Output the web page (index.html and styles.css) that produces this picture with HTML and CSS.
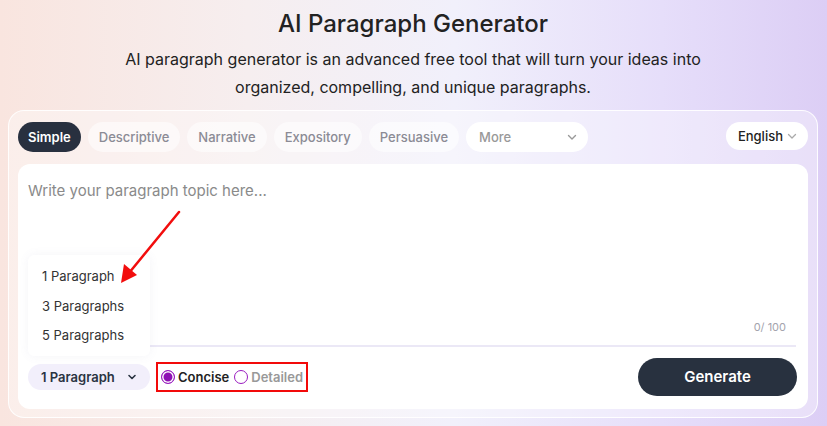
FILE: index.html
```html
<!DOCTYPE html>
<html lang="en">
<head>
  <meta charset="UTF-8">
  <title>AI Paragraph Generator</title>
  <link rel="stylesheet" href="styles.css">
</head>
<body>
  <div class="page">
    <h1>AI Paragraph Generator</h1>
    <p class="intro">AI paragraph generator is an advanced free tool that will turn your ideas into organized, compelling, and unique paragraphs.</p>

    <div class="card">
      <div class="tabs">
        <button class="tab active">Simple</button>
        <button class="tab">Descriptive</button>
        <button class="tab">Narrative</button>
        <button class="tab">Expository</button>
        <button class="tab">Persuasive</button>
        <button class="tab more">More
          <svg width="12" height="12" viewBox="0 0 12 12"><path d="M2.5 4.5 6 8l3.5-3.5" fill="none" stroke="#999" stroke-width="1.4" stroke-linecap="round" stroke-linejoin="round"/></svg>
        </button>
        <button class="lang">English
          <svg width="12" height="12" viewBox="0 0 12 12"><path d="M2.5 4.5 6 8l3.5-3.5" fill="none" stroke="#aaa" stroke-width="1.3" stroke-linecap="round" stroke-linejoin="round"/></svg>
        </button>
      </div>

      <div class="editor">
        <div class="input-area">
          <div class="placeholder">Write your paragraph topic here...</div>
          <div class="counter">0/ 100</div>
        </div>
        <div class="bottom">
          <button class="count-select">1 Paragraph
            <svg width="12" height="12" viewBox="0 0 12 12"><path d="M3 4.5 6 7.5l3-3" fill="none" stroke="#2a3342" stroke-width="1.6" stroke-linecap="round" stroke-linejoin="round"/></svg>
          </button>
          <div class="modes">
            <label class="mode on"><span class="radio"></span>Concise</label>
            <label class="mode"><span class="radio"></span>Detailed</label>
          </div>
          <button class="generate">Generate</button>
        </div>

        <ul class="menu">
          <li>1 Paragraph</li>
          <li>3 Paragraphs</li>
          <li>5 Paragraphs</li>
        </ul>
      </div>
    </div>
  </div>

  <svg class="arrow" width="827" height="426" viewBox="0 0 827 426">
    <line x1="179" y1="212" x2="129" y2="273" stroke="#f20d0d" stroke-width="2.5" stroke-linecap="round"/>
    <polygon points="121,283 124,264 137,275" fill="#f20d0d"/>
  </svg>
</body>
</html>
```

FILE: styles.css
```css
* {
  box-sizing: border-box;
}

body {
  margin: 0;
  height: 426px;
  overflow: hidden;
  font-family: Inter, "Noto Sans", sans-serif;
  color: #222;
  background: linear-gradient(90deg, #f9e5df 0%, #f6eeef 30%, #f1f0fb 55%, #e6defa 80%, #dccef5 100%);
}

.page {
  padding: 9px 9px 0 8px;
}

h1 {
  margin: 0;
  text-align: center;
  font-size: 24px;
  font-weight: 500;
  line-height: 30px;
  color: #222;
}

.intro {
  width: 600px;
  margin: 6px auto 9px;
  text-align: center;
  font-size: 16px;
  line-height: 28px;
  color: #222;
}

.card {
  height: 308px;
  border: 1.5px solid rgba(255, 255, 255, 0.9);
  border-radius: 16px;
  background: rgba(255, 255, 255, 0.35);
  padding: 11px 9px 9px 9px;
}

.tabs {
  display: flex;
  align-items: flex-start;
  gap: 7px;
}

button {
  font-family: inherit;
  border: none;
  cursor: pointer;
}

.tab {
  height: 30px;
  padding: 0 11px;
  border-radius: 15px;
  font-size: 13px;
  font-weight: 500;
  color: #8b8b95;
  background: rgba(255, 255, 255, 0.55);
}

.tab.active {
  background: #28303f;
  color: #fff;
  font-weight: 600;
  padding: 0 10px;
}

.tab.more {
  width: 122px;
  display: flex;
  align-items: center;
  justify-content: space-between;
  background: #fff;
  color: #999;
  padding: 0 10px 0 13px;
}

.lang {
  margin-left: auto;
  height: 28px;
  display: flex;
  align-items: center;
  gap: 3px;
  padding: 0 10px 0 12px;
  border-radius: 14px;
  background: #fff;
  font-size: 13px;
  font-weight: 500;
  color: #222;
}

.editor {
  position: relative;
  margin-top: 12px;
  height: 245px;
  background: #fff;
  border-radius: 12px;
  padding: 0 12px 0 10px;
}

.input-area {
  height: 183px;
  border-bottom: 2px solid #ebe8f6;
  position: relative;
  padding-top: 17px;
}

.placeholder {
  font-size: 15px;
  color: #8a8a8a;
  line-height: 20px;
}

.counter {
  position: absolute;
  right: 10px;
  bottom: 11px;
  font-size: 11px;
  color: #a3a3ad;
}

.bottom {
  display: flex;
  align-items: center;
  height: 61px;
  padding-bottom: 2px;
}

.count-select {
  width: 122px;
  height: 26px;
  display: flex;
  align-items: center;
  justify-content: space-between;
  padding: 0 12px 0 13px;
  border-radius: 13px;
  background: #f2effb;
  font-size: 13px;
  font-weight: 600;
  color: #2a3342;
}

.modes {
  display: flex;
  align-items: center;
  gap: 5px;
  height: 30px;
  margin-left: 6px;
  padding: 0 3px 0 3px;
  border: 2.5px solid #f20a0a;
}

.mode {
  display: flex;
  align-items: center;
  gap: 3px;
  font-size: 13px;
  font-weight: 600;
  color: #999;
}

.mode.on {
  color: #222;
}

.radio {
  width: 14px;
  height: 14px;
  border-radius: 50%;
  border: 1.5px solid #9a1cc0;
  background: #fff;
}

.mode.on .radio {
  background: #8e10b4;
  box-shadow: inset 0 0 0 1.5px #fff;
}

.generate {
  margin-left: auto;
  margin-right: -1px;
  width: 159px;
  height: 38px;
  border-radius: 19px;
  background: #28313f;
  color: #fff;
  font-size: 15px;
  font-weight: 600;
}

.menu {
  position: absolute;
  left: 10px;
  top: 91px;
  width: 122px;
  margin: 0;
  padding: 7px 0 5px;
  list-style: none;
  background: #fff;
  border-radius: 6px;
  box-shadow: 0 0 10px rgba(120, 110, 160, 0.08);
}

.menu li {
  padding: 0 14px;
  height: 29.5px;
  line-height: 29.5px;
  font-size: 13px;
  color: #333;
}

.arrow {
  position: absolute;
  left: 0;
  top: 0;
  pointer-events: none;
}
```
